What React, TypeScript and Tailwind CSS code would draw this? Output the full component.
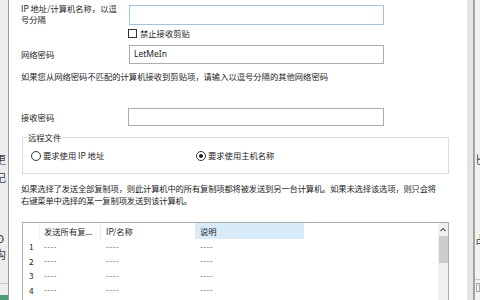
import React from "react";

const font = { fontFamily: '"Noto Sans CJK SC", "Noto Sans", sans-serif' };

function Dash() {
  return <span className="text-[#555] tracking-[0.5px] text-[8px]">----</span>;
}

export default function App() {
  const rows = [1, 2, 3, 4, 5];
  return (
    <div
      className="w-[480px] h-[300px] overflow-hidden flex bg-[#f0f0f0] text-[8.3px] text-[#1e1e1e]"
      style={font}
    >
      {/* left background strip */}
      <div className="w-[8px] h-full shrink-0 relative overflow-hidden bg-[#ececec]">
        <span className="absolute left-[-5px] top-[153px] text-[11px] leading-[12px] text-[#444]">更</span>
        <span className="absolute left-[-5px] top-[171px] text-[11px] leading-[12px] text-[#444]">记</span>
        <span className="absolute left-[-4px] top-[232px] text-[11px] leading-[12px] text-[#444]">O</span>
        <span className="absolute left-[-5px] top-[248px] text-[11px] leading-[12px] text-[#444]">沟</span>
        <div className="absolute left-0 top-[283px] w-full h-[1px] bg-[#c8c8c8]" />
        <div className="absolute left-0 top-[295px] w-full h-[5px] bg-[#4d9a7b]" />
      </div>
      <div className="w-[1px] h-full shrink-0 bg-[#9c9c9c]" />

      {/* dialog */}
      <div className="w-[458px] h-full shrink-0 bg-white flex flex-col overflow-hidden">
        {/* row 1 */}
        <div className="shrink-0 mt-[3px] flex pl-[12px]">
          <div className="w-[108px] leading-[11px] whitespace-nowrap">
            IP 地址/计算机名称，以逗
            <br />
            号分隔
          </div>
          <div className="mt-[2px] w-[255px] h-[20px] border border-[#9ec4d8] bg-white" />
        </div>
        {/* checkbox */}
        <div className="shrink-0 mt-[4px] flex items-center pl-[119px]">
          <div className="w-[9px] h-[9px] border border-[#333] bg-white" />
          <span className="ml-[3px] leading-[9px]">禁止接收剪贴</span>
        </div>
        {/* network password */}
        <div className="shrink-0 mt-[7px] flex items-center pl-[12px]">
          <div className="w-[108px]">网络密码</div>
          <div className="w-[255px] h-[19px] border border-[#adadad] flex items-center pl-[4px]">
            <span className="text-[8.5px]" style={{ fontFamily: '"Noto Sans", sans-serif' }}>LetMeIn</span>
          </div>
        </div>
        <div className="shrink-0 mt-[7px] pl-[12px] leading-[11px] whitespace-nowrap">
          如果您从网络密码不匹配的计算机接收到剪贴项，请输入以逗号分隔的其他网络密码
        </div>
        {/* receive password */}
        <div className="shrink-0 mt-[26px] flex items-center pl-[12px]">
          <div className="w-[107px]">接收密码</div>
          <div className="w-[256px] h-[18px] border border-[#adadad]" />
        </div>
        {/* group box */}
        <div className="shrink-0 mt-[11px] ml-[13px] w-[427px] h-[37px] border border-[#dcdcdc] relative flex items-center">
          <span className="absolute left-[4px] top-[-7px] bg-white px-[1px] leading-[12px]">远程文件</span>
          <div className="w-[173px] pl-[8px] flex items-center">
            <div className="w-[10px] h-[10px] rounded-full border border-[#333] bg-white" />
            <span className="ml-[2px]">要求使用 IP 地址</span>
          </div>
          <div className="flex items-center">
            <div className="w-[10px] h-[10px] rounded-full border border-[#333] bg-white flex items-center justify-center">
              <div className="w-[4px] h-[4px] rounded-full bg-[#222]" />
            </div>
            <span className="ml-[2px]">要求使用主机名称</span>
          </div>
        </div>
        {/* paragraph */}
        <div className="shrink-0 mt-[8px] pl-[12px] leading-[12px] whitespace-nowrap tracking-[-0.16px]">
          如果选择了发送全部复制项，则此计算机中的所有复制项都将被发送到另一台计算机。如果未选择该选项，则只会将
          <br />
          右键菜单中选择的某一复制项发送到该计算机。
        </div>
        {/* list view */}
        <div className="shrink-0 mt-[16px] ml-[13px] w-[427px] h-[90px] border border-[#acacac] flex">
          <div className="flex-1 flex flex-col">
            <div className="shrink-0 h-[16px] flex items-center">
              <div className="w-[17px] h-full border-r border-[#f0f0f0]" />
              <div className="w-[61px] h-full pl-[4px] flex items-center border-r border-[#eeeeee]">发送所有复...</div>
              <div className="w-[94px] h-full pl-[5px] flex items-center">IP/名称</div>
              <div className="w-[109px] h-full pl-[5px] flex items-center bg-[#d9ebf9]">说明</div>
            </div>
            {rows.map((r) => (
              <div key={r} className="shrink-0 h-[14.5px] flex items-center">
                <div className="w-[17px] pl-[6px]">{r}</div>
                <div className="w-[61px] pl-[4px]"><Dash /></div>
                <div className="w-[94px] pl-[5px]"><Dash /></div>
                <div className="w-[109px] pl-[5px]"><Dash /></div>
              </div>
            ))}
          </div>
          <div className="w-[10px] h-full bg-[#f0f0f0] flex flex-col items-center">
            <svg width="10" height="12" viewBox="0 0 10 12" className="mt-[1px] shrink-0">
              <path d="M2.5 7 L5 4.5 L7.5 7" fill="none" stroke="#606060" strokeWidth="1.1" />
            </svg>
            <div className="shrink-0 w-[9px] h-[27px] bg-[#cdcdcd]" />
          </div>
        </div>
      </div>

      {/* right frame */}
      <div className="w-[6px] h-full shrink-0 bg-[#e4e4e4]" />
      <div className="w-[2px] h-full shrink-0 bg-[#a3a3a3]" />
      <div className="w-[5px] h-full shrink-0 relative overflow-hidden bg-[#f2f2f2]">
        <span className="absolute left-[0px] top-[153px] text-[11px] leading-[12px] text-[#444]">匕</span>
        <span className="absolute left-[0px] top-[233px] text-[11px] leading-[12px] text-[#444]">占</span>
        <div className="absolute left-0 top-[279px] w-full h-[1px] bg-[#c8c8c8]" />
        <div className="absolute left-[1px] top-[283px] w-[4px] h-[9px] border border-[#aaa]" />
      </div>
    </div>
  );
}
